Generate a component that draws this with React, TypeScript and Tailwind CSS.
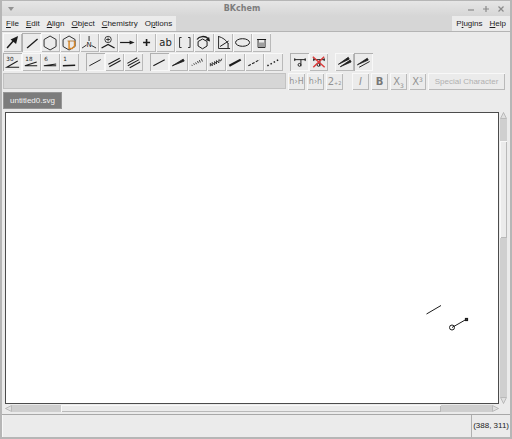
import React from 'react';
import clsx from 'clsx';

interface Tool {
  id: string;
  label: string;
  icon: React.ReactNode;
  active?: boolean;
}

const RAISED = 'shadow-[inset_1px_1px_0_#f8f8f8,inset_-1px_-1px_0_#b9b9b9]';
const SUNKEN = 'shadow-[inset_1px_1px_0_#b0b0b0,inset_-1px_-1px_0_#f8f8f8]';

const HEX = 'M9 3l6 3.5v7L9 17l-6-3.5v-7z';

const MODES: Tool[] = [
  {
    id: 'edit',
    label: 'Edit',
    icon: (
      <>
        <path d="M4 15l7-8" strokeWidth="1.5" />
        <path d="M15 3l-2 8-5.500-4.500z" fill="currentColor" stroke="none" />
      </>
    ),
  },
  { id: 'draw', label: 'Draw', active: true, icon: <path d="M5 15L15.500 6" strokeWidth="1.3" /> },
  { id: 'template', label: 'Template', icon: <path d={HEX} strokeWidth="0.9" /> },
  {
    id: 'biotemplate',
    label: 'Biomolecule template',
    icon: (
      <>
        <path d={HEX} strokeWidth="0.9" />
        <path d="M9 8v7.500h3.500M14.500 8v5l-2.500 2.500" stroke="#d98a2b" strokeWidth="1.5" />
        <path d="M7.500 8h7" stroke="#a86a20" strokeWidth="0.8" />
      </>
    ),
  },
  {
    id: 'user-template',
    label: 'User template',
    icon: (
      <>
        <path d="M9 3v5M6.500 12L2 15M11.500 12.500l4.500 2.500" strokeWidth="0.9" />
        <text x="9" y="14" fontSize="7" textAnchor="middle" fill="currentColor" stroke="none">
          N
        </text>
      </>
    ),
  },
  {
    id: 'mark',
    label: 'Mark',
    icon: (
      <>
        <circle cx="9" cy="6.500" r="3.200" strokeWidth="0.8" />
        <path d="M7 6.500h4M9 4.500v4" strokeWidth="0.8" />
        <path d="M2.500 15L9 11.500l6.500 3.500" strokeWidth="1.4" />
      </>
    ),
  },
  {
    id: 'arrow',
    label: 'Arrow',
    icon: (
      <>
        <path d="M2 9.500h11" strokeWidth="1.2" />
        <path d="M11.500 7.500l5 2-5 2z" fill="currentColor" stroke="none" />
      </>
    ),
  },
  { id: 'plus', label: 'Plus', icon: <path d="M6 9.500h7M9.500 6v7" strokeWidth="1.6" /> },
  {
    id: 'text',
    label: 'Text',
    icon: (
      <text x="9.500" y="13" fontSize="10" textAnchor="middle" fill="currentColor" stroke="none">
        ab
      </text>
    ),
  },
  { id: 'bracket', label: 'Bracket', icon: <path d="M6.500 4.500h-2v10h2M13 4.500h2v10h-2" strokeWidth="0.9" /> },
  {
    id: 'rotate',
    label: 'Rotate',
    icon: (
      <>
        <path d="M8.500 6l4.500 2.500v4.500l-4.500 2.800L4 13V8.500z" />
        <path d="M3 6.500C5 3 11 2.500 14 5.500" strokeWidth="1.3" />
        <path d="M16 8.500l-4.500-1.500L15 4z" fill="currentColor" stroke="none" />
      </>
    ),
  },
  {
    id: 'bond-align',
    label: 'Transform',
    icon: (
      <>
        <path d="M4.500 3v12.500H16M4.500 3.500c4 1 7.500 3.500 9.500 7" strokeWidth="0.9" />
        <path d="M6 13.500l8.500-5.500M14 10v5" />
      </>
    ),
  },
  { id: 'vector', label: 'Vector graphics', icon: <ellipse cx="9.500" cy="9.500" rx="7" ry="3.800" /> },
  {
    id: 'misc',
    label: 'Delete',
    icon: (
      <>
        <path d="M5 6.500h9" strokeWidth="1" />
        <path d="M6 7v7.500h7V7" strokeWidth="0.9" />
        <path d="M6.500 9.500h6v4.500h-6z" fill="#a0a0a0" stroke="none" />
      </>
    ),
  },
];

function AngleIcon({ value, path, width = '1.1' }: { value: string; path: string; width?: string }) {
  return (
    <>
      <text x="3" y="8" fontSize="6" fill="currentColor" stroke="none">
        {value}
      </text>
      <path d={path} strokeWidth={width} />
    </>
  );
}

const BOND = 'M3 13.500L15 7';

const SUBMODES: Tool[][] = [
  [
    { id: 'a30', label: '30 degrees', active: true, icon: <AngleIcon value="30" path="M16.500 15H3.500L15 8.500" /> },
    { id: 'a18', label: '18 degrees', icon: <AngleIcon value="18" path="M15.500 13.500h-13L15 9.500" /> },
    { id: 'a6', label: '6 degrees', icon: <AngleIcon value="6" path="M15.500 13.500h-13l13-2" /> },
    { id: 'a1', label: '1 degree', icon: <AngleIcon value="1" path="M2.500 13.500l13-.5" width="1.7" /> },
  ],
  [
    { id: 'single', label: 'Single', active: true, icon: <path d={BOND} /> },
    { id: 'double', label: 'Double', icon: <path d="M3 12L15 5.500M4 14.500L16 8" strokeWidth="1.2" /> },
    { id: 'triple', label: 'Triple', icon: <path d="M3 11L13.500 5M3.500 13.500l12-6.500M5.500 15.500l11-6" strokeWidth="1.1" /> },
  ],
  [
    { id: 'normal', label: 'Normal', active: true, icon: <path d={BOND} strokeWidth="1.2" /> },
    { id: 'wedge', label: 'Wedge', icon: <path d="M3 13.500L14.500 6.500l1 2z" fill="currentColor" strokeWidth="0.9" /> },
    {
      id: 'hatch',
      label: 'Hatch',
      icon: <path d="M3.500 12.500l.5 1M5.500 11l.8 1.500M7.500 10l1 1.800M9.500 8.500l1 2.200M11.500 7.500l1 2.500M13.500 6l1.200 3" strokeWidth="0.9" />,
    },
    {
      id: 'wavy',
      label: 'Wavy',
      icon: <path d="M3 14v-3l2 2.500v-3.500l2.500 2.500V9l2 2.500V8l2.500 2.500V7l2 1.500 1-2.500" strokeWidth="0.9" />,
    },
    { id: 'bold', label: 'Bold', icon: <path d={BOND} strokeWidth="2.300" /> },
    { id: 'dash', label: 'Dashed', icon: <path d={BOND} strokeWidth="1.2" strokeDasharray="3 1.5" /> },
    { id: 'dot', label: 'Dotted', icon: <path d={BOND} strokeWidth="1.6" strokeDasharray="1.6 2.200" /> },
  ],
  [
    {
      id: 'fixed',
      label: 'Fixed length',
      active: true,
      icon: (
        <>
          <path d="M4 7h12M4.500 5.500v3M15.500 5.500v3M11 7v7" />
          <circle cx="9.500" cy="12.500" r="1.500" />
        </>
      ),
    },
    {
      id: 'freestyle',
      label: 'Freestyle',
      icon: (
        <>
          <path d="M4 7h12M4.500 5.500v3M15.500 5.500v3M11 7v7" />
          <circle cx="9.500" cy="12.500" r="1.500" />
          <path d="M3.500 4l12.500 11M15.500 4L4 15" stroke="#dc3b3b" strokeWidth="1.6" />
        </>
      ),
    },
  ],
  [
    {
      id: 'simple-double',
      label: 'Normal double bonds',
      icon: <path d="M3 12L13.500 4.500l1 2zM5 14.500l10.500-7 1 2z" fill="currentColor" strokeWidth="0.8" />,
    },
    {
      id: 'wedge-double',
      label: 'Simple double bonds',
      active: true,
      icon: (
        <>
          <path d="M3 12.500L13.500 5.500l1 2z" fill="currentColor" strokeWidth="0.8" />
          <path d="M5 15l11-6" />
        </>
      ),
    },
  ],
];

function ToolButton({ tool, className }: { tool: Tool; className?: string }) {
  return (
    <button
      type="button"
      aria-label={tool.label}
      aria-pressed={!!tool.active}
      className={clsx('text-[#1c1c1c]', tool.active ? SUNKEN : RAISED, className)}
    >
      <svg viewBox="0 0 19 19" className="h-full w-full" fill="none" stroke="currentColor" fontFamily="DejaVu Sans, sans-serif">
        {tool.icon}
      </svg>
    </button>
  );
}

function MenuItem({ name }: { name: string }) {
  const at = name === 'Plugins' || name === 'Options' ? 1 : 0;
  return (
    <button type="button">
      {name.slice(0, at)}
      <span className="underline underline-offset-1">{name[at]}</span>
      {name.slice(at + 1)}
    </button>
  );
}

function MenuBar() {
  return (
    <nav className="flex h-4 border-b border-[#b4b4b4] bg-[#d6d6d6] text-[#1c1c1c]">
      <div className="flex gap-[7px] bg-[#ebebeb] px-1">
        {['File', 'Edit', 'Align', 'Object', 'Chemistry', 'Options'].map((name) => (
          <MenuItem key={name} name={name} />
        ))}
      </div>
      <div className="ml-auto flex gap-[7px] bg-[#ebebeb] px-1">
        {['Plugins', 'Help'].map((name) => (
          <MenuItem key={name} name={name} />
        ))}
      </div>
    </nav>
  );
}

const FORMAT_BUTTON = `flex h-[17px] w-[17px] items-center justify-center ${RAISED}`;

function FormatBar() {
  return (
    <div className="mt-[2px] flex h-[17px] gap-[2px] pr-[2px] font-['DejaVu_Sans',sans-serif] text-[10px] leading-none text-[#929292]">
      <input
        aria-label="Text to edit"
        disabled
        className="h-4 min-w-0 flex-1 border border-[#c2c2c2] bg-[#d6d6d6]"
      />
      <button type="button" disabled aria-label="Implicit hydrogens" className={`${FORMAT_BUTTON} text-[8px]`}>
        h<span>›</span>H
      </button>
      <button type="button" disabled aria-label="Lower case" className={`${FORMAT_BUTTON} text-[8px]`}>
        h<span>›</span>h
      </button>
      <button type="button" disabled aria-label="Numbers to subscript" className={FORMAT_BUTTON}>
        2<span className="pt-1 text-[5px]">+2</span>
      </button>
      <div className="ml-[7px] flex gap-[2px]">
        <button type="button" disabled aria-label="Italic" className={`${FORMAT_BUTTON} italic`}>
          I
        </button>
        <button type="button" disabled aria-label="Bold" className={`${FORMAT_BUTTON} font-bold text-[#777]`}>
          B
        </button>
        <button type="button" disabled aria-label="Subscript" className={FORMAT_BUTTON}>
          X<span className="pt-2 text-[6px]">3</span>
        </button>
        <button type="button" disabled aria-label="Superscript" className={FORMAT_BUTTON}>
          X<span className="pb-1 text-[6px]">3</span>
        </button>
      </div>
      <button
        type="button"
        disabled
        className={`w-[77px] font-['Liberation_Sans',sans-serif] text-[8px] text-[#b0b0b0] ${RAISED}`}
      >
        Special Character
      </button>
    </div>
  );
}

function Drawing() {
  return (
    <svg className="block h-full w-full" fill="none" stroke="#1c1c1c" aria-label="Drawing">
      <path d="M420.500 201l14.500-8.500" />
      <path d="M446 214.500l14-8" />
      <circle cx="446" cy="214.500" r="2.500" />
      <rect x="459.500" y="205.500" width="2" height="2" strokeWidth="1.200" />
    </svg>
  );
}

const SCROLL_ARROW = 'h-[7px] w-[7px] bg-[#ebebeb]';

function ScrollArrow({ d }: { d: string }) {
  return (
    <svg viewBox="0 0 7 7" className={SCROLL_ARROW} fill="#e0e0e0" stroke="#a8a8a8" strokeWidth="0.7">
      <path d={d} />
    </svg>
  );
}

function Workspace() {
  return (
    <main className="grid min-h-0 flex-1 grid-cols-[minmax(0,1fr)_7px] grid-rows-[minmax(0,1fr)_7px] gap-px px-[3px] pb-[2px] pt-[3px]">
      <div className="min-h-0 border border-[#4c4c4c] bg-white">
        <Drawing />
      </div>
      <div className="flex flex-col bg-[#cfcfcf]">
        <ScrollArrow d="M.5 6.500L3.500.5l3 6z" />
        <div className="flex flex-1 flex-col">
          <div className="flex-[22]" />
          <div className={`flex-[97] bg-[#ebebeb] ${RAISED}`} />
          <div className="flex-[158]" />
        </div>
        <ScrollArrow d="M.5.500h6l-3 6z" />
      </div>
      <div className="flex bg-[#cfcfcf]">
        <ScrollArrow d="M6.500.5v6l-6-3z" />
        <div className="flex flex-1">
          <div className="flex-[49]" />
          <div className={`flex-[379] bg-[#ebebeb] ${RAISED}`} />
          <div className="flex-[51]" />
        </div>
        <ScrollArrow d="M.5.500v6l6-3z" />
      </div>
    </main>
  );
}

export default function App() {
  return (
    <div className="flex h-screen flex-col border-x-2 border-b-2 border-[#b6b6b6] bg-[#ebebeb] font-['Liberation_Sans',Arial,sans-serif] text-[8px] leading-none">
      <header className="flex h-4 items-center border-t border-[#b6b6b6] bg-linear-to-b from-[#e6e6e6] to-[#d6d6d6] px-[6px] text-[#8a8a8a]">
        <button type="button" aria-label="Window menu" className="flex w-2">
          <svg viewBox="0 0 6 4" className="h-1 w-[6px]">
            <path d="M0 0h6L3 4z" fill="#929292" />
          </svg>
        </button>
        <h1 className="flex-1 text-center font-['DejaVu_Sans',sans-serif] font-bold text-[#7d7d7d]">BKchem</h1>
        <div className="flex justify-end gap-[9px]">
          {[
            ['Minimize', 'M0 4h6'],
            ['Maximize', 'M0 3h6M3 0v6'],
            ['Close', 'M.5.500l5 5M5.500.5l-5 5'],
          ].map(([label, d]) => (
            <button key={label} type="button" aria-label={label}>
              <svg viewBox="0 0 6 6" className="h-[6px] w-[6px]" fill="none" stroke="#8a8a8a" strokeWidth="1.2">
                <path d={d} />
              </svg>
            </button>
          ))}
        </div>
      </header>
      <MenuBar />
      <div className="mt-px flex flex-col pl-px pr-[3px]">
        <div className="flex h-[19px] w-[268px]">
          {MODES.map((tool) => (
            <ToolButton key={tool.id} tool={tool} className="min-w-0 flex-1" />
          ))}
        </div>
        <div className="mt-px flex gap-[7px]">
          {SUBMODES.map((group) => (
            <div key={group[0].id} className="flex">
              {group.map((tool) => (
                <ToolButton key={tool.id} tool={tool} className="h-[18px] w-[19px]" />
              ))}
            </div>
          ))}
        </div>
        <FormatBar />
      </div>
      <div className="mt-[2px] flex pl-px" role="tablist">
        <button
          type="button"
          role="tab"
          aria-selected
          className="h-[17px] border border-[#969696] bg-[#7c7c7c] px-[6px] text-[#f2f2f2]"
        >
          untitled0.svg
        </button>
      </div>
      <Workspace />
      <footer className="flex h-[23px] border-t border-[#a8a8a8] text-[#1c1c1c]">
        <div className="flex-1 border-l border-[#f8f8f8]" />
        <output className="flex items-center border-l border-[#b0b0b0] px-px">(388, 311)</output>
      </footer>
    </div>
  );
}
